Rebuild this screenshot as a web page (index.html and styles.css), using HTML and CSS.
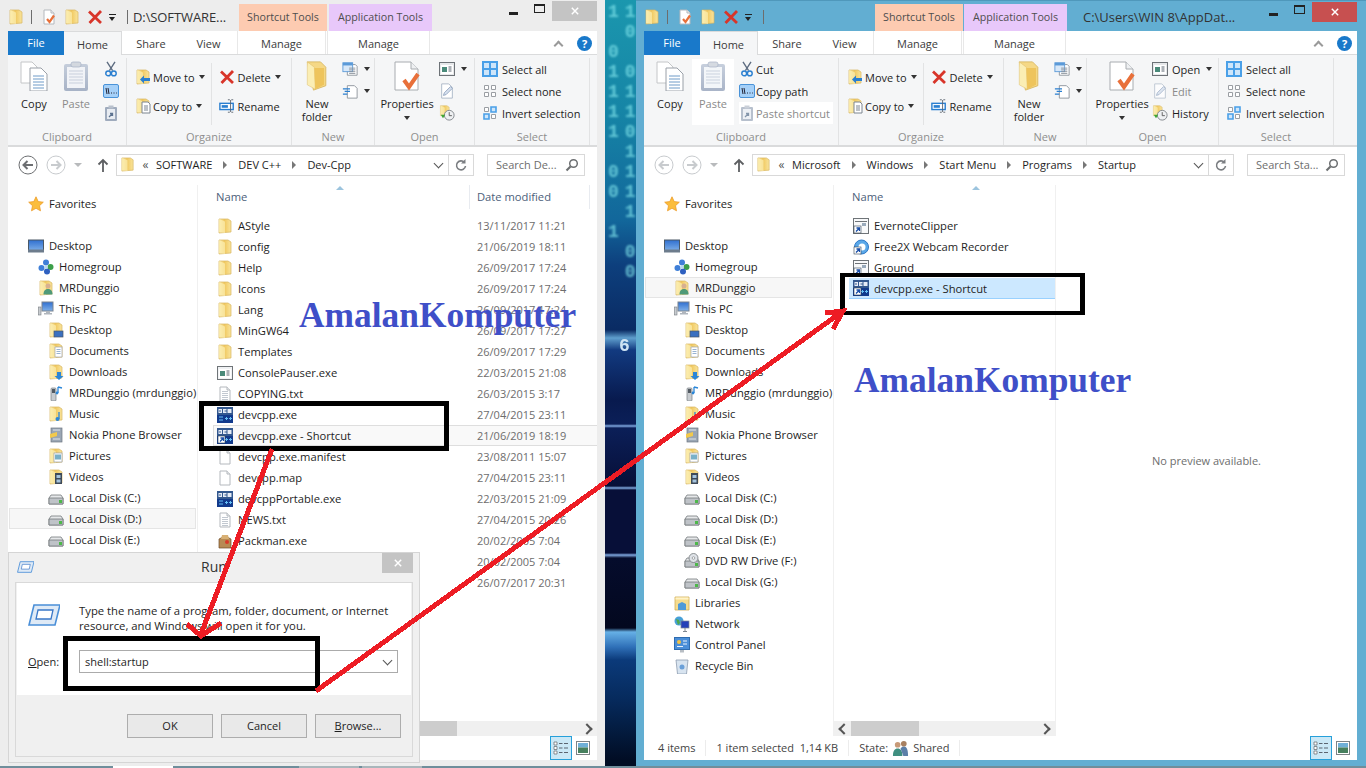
FILE: index.html
```html
<!DOCTYPE html>
<html lang="en">
<head>
  <meta charset="UTF-8">
  <title>Explorer</title>
  <link rel="stylesheet" href="styles.css">
</head>
<body>
  <svg class="defs" width="0" height="0">
    <defs>
      <linearGradient id="g-folder" x1="0" x2="1" y1="0" y2="0">
        <stop offset="0" stop-color="#fcf0b8"/><stop offset=".45" stop-color="#f0c860"/><stop offset=".6" stop-color="#f3d070"/><stop offset="1" stop-color="#f9e49c"/>
      </linearGradient>
      <linearGradient id="g-screen" x1="0" x2="0" y1="0" y2="1">
        <stop offset="0" stop-color="#2f6fd0"/><stop offset="1" stop-color="#7fb0e8"/>
      </linearGradient>
      <linearGradient id="g-clip" x1="0" x2="0" y1="0" y2="1">
        <stop offset="0" stop-color="#b5c0d2"/><stop offset="1" stop-color="#8d9cb6"/>
      </linearGradient>
      <symbol id="folder" viewBox="0 0 16 16">
        <path d="M2 1h9l3 2v11l-12 1z" fill="url(#g-folder)" stroke="#d8b660" stroke-width=".7"/>
        <path d="M2 1l6 2.5V15l-6-1z" fill="#fbecae" opacity=".75"/>
      </symbol>
      <symbol id="folder-tall" viewBox="0 0 26 34">
        <path d="M2 1h15l6 6v21l-14 5z" fill="#f5d886" stroke="#d8b660"/>
        <path d="M2 1l8 6 1 25-9-5z" fill="#fbeeb4" stroke="#e0c070" stroke-width=".6"/>
        <path d="M10 8h11v19l-10 5z" fill="#eec45c"/>
      </symbol>
      <symbol id="page" viewBox="0 0 16 16">
        <path d="M3 1h7l3 3v11H3z" fill="#fff" stroke="#b4b8bd"/>
        <path d="M10 1v3h3" fill="#eceef0" stroke="#b4b8bd"/>
      </symbol>
      <symbol id="txt" viewBox="0 0 16 16">
        <use href="#page"/>
        <path d="M5 5.500h6M5 7.500h6M5 9.500h6M5 11.500h6M5 13.500h6" stroke="#c2c8d0"/>
      </symbol>
      <symbol id="check" viewBox="0 0 16 16">
        <use href="#page"/>
        <path d="M6 10l2.500 3L13 6.500" fill="none" stroke="#e8703a" stroke-width="2.200"/>
      </symbol>
      <symbol id="cross" viewBox="0 0 16 16">
        <path d="M2 2.500L14 14M14 2L2.500 14" stroke="#d8352a" stroke-width="2.800"/>
      </symbol>
      <symbol id="copy" viewBox="0 0 28 30">
        <path d="M1 1h11l5 5v16H1z" fill="#fff" stroke="#c4c6c8"/>
        <path d="M10 7h11l6 6v17H10z" fill="#fff" stroke="#9aa0a8"/>
        <path d="M13 15h11M13 18h11M13 21h11M13 24h11M13 27h11" stroke="#6f9bc8"/>
      </symbol>
      <symbol id="paste" viewBox="0 0 26 30">
        <rect x="1" y="3" width="24" height="27" rx="2" fill="url(#g-clip)"/>
        <rect x="4" y="6" width="18" height="21" fill="#f0f3f8"/>
        <path d="M6 10h14M6 13h14M6 16h14M6 19h14M6 22h14" stroke="#b9c3d3"/>
        <rect x="8" y="1" width="10" height="5" rx="2" fill="#c8ced8" stroke="#8d9cb6" stroke-width=".7"/>
      </symbol>
      <symbol id="cut" viewBox="0 0 16 20">
        <path d="M3 1l7 11M13 1L6 12" stroke="#5d6c80" stroke-width="1.700"/>
        <circle cx="4.500" cy="15.500" r="3" fill="none" stroke="#2a7fd0" stroke-width="1.800"/>
        <circle cx="11.500" cy="15.500" r="3" fill="none" stroke="#2a7fd0" stroke-width="1.800"/>
      </symbol>
      <symbol id="copypath" viewBox="0 0 16 14">
        <rect x=".5" y=".5" width="15" height="13" rx="1.500" fill="#a5d0f8" stroke="#4a93d8"/>
        <path d="M3 4l1 6M5 4l1 6M8 9h1M10.500 9h1M13 9h.8" stroke="#223" stroke-width="1"/>
      </symbol>
      <symbol id="pasteshort" viewBox="0 0 14 16">
        <rect x="1" y="2" width="12" height="14" rx="1" fill="#9fabbd"/>
        <rect x="3" y="4" width="8" height="10" fill="#e8ecf2"/>
        <rect x="4.500" y="0.500" width="5" height="3" fill="#b8c0cc"/>
        <path d="M5 12l3-3M6 8.500h2.500V11" fill="none" stroke="#5d7390" stroke-width="1.300"/>
      </symbol>
      <symbol id="moveto" viewBox="0 0 16 16">
        <use href="#folder"/>
        <path d="M15 9H9V6.500L5 10.500l4 4V12h6z" fill="#2a7fd0"/>
      </symbol>
      <symbol id="copyto" viewBox="0 0 16 16">
        <use href="#folder"/>
        <path d="M7 4h6l2 2v9H7z" fill="#fff" stroke="#7d8590"/>
        <path d="M9 8h4M9 10h4M9 12h4" stroke="#7d8590"/>
      </symbol>
      <symbol id="rename" viewBox="0 0 18 16">
        <rect x="1" y="5" width="15" height="7" fill="#fff" stroke="#2a7fd0" stroke-width="1.600"/>
        <rect x="3" y="7" width="7" height="3" fill="#2a7fd0"/>
        <path d="M10 1h2l1 1 1-1h2M13 2v12M10 15h2l1-1 1 1h2" fill="none" stroke="#5b6470"/>
      </symbol>
      <symbol id="newitem" viewBox="0 0 18 16">
        <path d="M6 3h9l2 2v10H6z" fill="#fff" stroke="#8b9199"/>
        <rect x="1" y="1" width="11" height="10" fill="#d8e8f8" stroke="#5b9ad8"/>
        <rect x="1" y="1" width="11" height="3" fill="#5b9ad8"/>
        <path d="M8 7h7M8 9h7M8 11h7M8 13h7" stroke="#8b9199"/>
      </symbol>
      <symbol id="easy" viewBox="0 0 18 18">
        <path d="M6 3h8l3 3v11H6z" fill="#fff" stroke="#8b9199"/>
        <path d="M1 6.500h8M3 9.500h6M1 12.500h5" stroke="#2a7fd0" stroke-width="1.400"/>
      </symbol>
      <symbol id="props" viewBox="0 0 26 30">
        <path d="M1 1h16l7 7v21H1z" fill="#fff" stroke="#a8acb0"/>
        <path d="M17 1v7h7" fill="#eef0f2" stroke="#a8acb0"/>
        <path d="M10 19l5 7 9-13" fill="none" stroke="#e8703a" stroke-width="4"/>
      </symbol>
      <symbol id="openwin" viewBox="0 0 16 14">
        <rect x=".5" y=".5" width="15" height="13" fill="#e6e8ea" stroke="#6d7277"/>
        <rect x="2" y="3" width="12" height="9" fill="#fff"/>
        <rect x="3" y="5" width="5" height="5" fill="#4a8a7a"/>
        <path d="M9.500 5h3M9.500 7h3M9.500 9h3" stroke="#5b6470"/>
      </symbol>
      <symbol id="edit" viewBox="0 0 16 18">
        <path d="M2 1h8l4 4v12H2z" fill="#fff" stroke="#a8b4c6"/>
        <path d="M4 14l1-3 7-7 2 2-7 7z" fill="#d6e0ee" stroke="#8fa3bf"/>
      </symbol>
      <symbol id="history" viewBox="0 0 18 18">
        <use href="#folder" width="13" height="13"/>
        <circle cx="11.500" cy="11.500" r="5.500" fill="#eef0f2" stroke="#7b8186"/>
        <path d="M11.500 8v4h3" fill="none" stroke="#555"/>
        <path d="M2 11h5L4.500 15z" fill="#3fa535"/>
      </symbol>
      <symbol id="selall" viewBox="0 0 16 16">
        <rect width="16" height="16" fill="#4aa0e8"/>
        <path d="M2 2h5v5H2zM9 2h5v5H9zM2 9h5v5H2zM9 9h5v5H9z" fill="#cfe6fa"/>
      </symbol>
      <symbol id="selnone" viewBox="0 0 16 16">
        <path d="M2.500 2.500h4v4h-4zM9.500 2.500h4v4h-4zM2.500 9.500h4v4h-4zM9.500 9.500h4v4h-4z" fill="#fff" stroke="#9a9ea3"/>
      </symbol>
      <symbol id="invert" viewBox="0 0 16 16">
        <path d="M2.500 2.500h4v4h-4zM9.500 9.500h4v4h-4z" fill="#fff" stroke="#9a9ea3"/>
        <path d="M9 2h5v5H9zM2 9h5v5H2z" fill="#cfe6fa" stroke="#4aa0e8" stroke-width="1.600"/>
      </symbol>
      <symbol id="back" viewBox="0 0 20 20">
        <circle cx="10" cy="10" r="9" fill="#fff" stroke="currentColor"/>
        <path d="M15 10H6M9.500 6l-4 4 4 4" fill="none" stroke="currentColor" stroke-width="2"/>
      </symbol>
      <symbol id="fwd" viewBox="0 0 20 20">
        <circle cx="10" cy="10" r="9" fill="#fff" stroke="currentColor"/>
        <path d="M5 10h9M10.500 6l4 4-4 4" fill="none" stroke="currentColor" stroke-width="2"/>
      </symbol>
      <symbol id="up" viewBox="0 0 12 14">
        <path d="M6 14V2M1.500 6.500L6 2l4.500 4.500" fill="none" stroke="#5d5f62" stroke-width="1.800"/>
      </symbol>
      <symbol id="refresh" viewBox="0 0 12 14">
        <path d="M9.500 4.500A4.500 4.500 0 1 0 10.500 8" fill="none" stroke="#7b7e82" stroke-width="1.600"/>
        <path d="M10.500 1v4.500H6z" fill="#7b7e82"/>
      </symbol>
      <symbol id="search" viewBox="0 0 14 14">
        <circle cx="8.500" cy="5.500" r="3.800" fill="none" stroke="#6d7072" stroke-width="1.500"/>
        <path d="M5.500 8.500L1.500 12.500" stroke="#6d7072" stroke-width="2.200"/>
      </symbol>
      <symbol id="star" viewBox="0 0 16 16">
        <path d="M8 .8l2.200 4.800 5.100.6-3.800 3.500 1 5.100L8 12.300l-4.500 2.500 1-5.100L.7 6.200l5.100-.6z" fill="#fbbd3c" stroke="#ec9c2a" stroke-width=".8"/>
      </symbol>
      <symbol id="desktop" viewBox="0 0 16 13">
        <rect x=".5" y=".5" width="15" height="11" fill="url(#g-screen)" stroke="#4a5866"/>
        <rect y="10" width="16" height="3" fill="#6d7c8c"/>
      </symbol>
      <symbol id="home" viewBox="0 0 16 16">
        <circle cx="8" cy="3.500" r="3" fill="#3f7fd8"/>
        <circle cx="3.500" cy="9" r="3" fill="#3f7fd8"/>
        <circle cx="12.500" cy="8" r="3" fill="#3c9f4a"/>
        <circle cx="9" cy="12.500" r="3" fill="#2f60c0"/>
        <circle cx="8" cy="8" r="1.800" fill="#b8d8f0"/>
      </symbol>
      <symbol id="user" viewBox="0 0 16 16">
        <use href="#folder"/>
        <circle cx="10" cy="6" r="2.500" fill="#d8b090"/>
        <path d="M5.500 14.500c0-4 2-5.500 4.500-5.500s4.500 1.500 4.500 5.500z" fill="#4f9a78"/>
      </symbol>
      <symbol id="pc" viewBox="0 0 16 16">
        <rect x="4" y="1" width="11" height="9" fill="url(#g-screen)" stroke="#7b8490"/>
        <path d="M8 10h4v2H8zM6 12h8v1.500H6z" fill="#b0b6bd"/>
        <rect x="0.500" y="6" width="2.500" height="8" fill="#c8ccd0" stroke="#777c82" stroke-width=".6"/>
      </symbol>
      <symbol id="f-desktop" viewBox="0 0 16 16">
        <use href="#folder"/>
        <rect x="6" y="9" width="9" height="6" fill="#3a70c0" stroke="#4a5866" stroke-width=".7"/>
      </symbol>
      <symbol id="f-docs" viewBox="0 0 16 16">
        <use href="#folder"/>
        <rect x="7" y="4" width="7" height="10" fill="#fff" stroke="#a0a4a8" stroke-width=".7"/>
        <path d="M8.500 6.500h4M8.500 8.500h4M8.500 10.500h4" stroke="#7da0c8" stroke-width=".8"/>
      </symbol>
      <symbol id="f-down" viewBox="0 0 16 16">
        <use href="#folder"/>
        <path d="M9 8h4v4h2.500L11 16l-4.500-4H9z" fill="#2a86d8"/>
      </symbol>
      <symbol id="phone" viewBox="0 0 16 16">
        <rect x="3" y="3" width="5" height="13" rx="1" fill="#c8ccd0" stroke="#777c82" stroke-width=".7"/>
        <rect x="4" y="4" width="3" height="4" fill="#525a62"/>
        <path d="M10 2v6M10 2l4 1" fill="none" stroke="#2a86d8" stroke-width="1.300"/>
        <circle cx="9" cy="8" r="1.400" fill="#2a86d8"/>
      </symbol>
      <symbol id="f-music" viewBox="0 0 16 16">
        <use href="#folder"/>
        <path d="M11 6v7" stroke="#2a86d8" stroke-width="1.300"/>
        <circle cx="9.500" cy="13" r="2" fill="#2a86d8"/>
      </symbol>
      <symbol id="nokia" viewBox="0 0 16 16">
        <rect x="3" y="1" width="11" height="14" fill="#9aa6b4" stroke="#6d7680" stroke-width=".7"/>
        <path d="M2 7l7-2v4l-7 2z" fill="#f2c94c"/>
        <path d="M5 3h7M5 12h7" stroke="#dfe4ea"/>
      </symbol>
      <symbol id="f-pics" viewBox="0 0 16 16">
        <use href="#folder"/>
        <rect x="6" y="5" width="8" height="9" fill="#fff" stroke="#9aa0a6" stroke-width=".7"/>
        <rect x="7" y="6.500" width="6" height="5" fill="#79b0c8"/>
      </symbol>
      <symbol id="f-video" viewBox="0 0 16 16">
        <use href="#folder"/>
        <rect x="7" y="4" width="7" height="11" fill="#3e4a58"/>
        <rect x="8.500" y="6" width="4" height="3" fill="#a5c4de"/>
        <rect x="8.500" y="10.500" width="4" height="3" fill="#a5c4de"/>
      </symbol>
      <symbol id="disk" viewBox="0 0 16 16">
        <path d="M1 8l2-3h10l2 3v6H1z" fill="#e6e8ea" stroke="#74787c" stroke-width=".8"/>
        <path d="M1 8h14v6H1z" fill="#bfc3c8" stroke="#74787c" stroke-width=".8"/>
        <rect x="11" y="10" width="3" height="3" fill="#4db84a"/>
      </symbol>
      <symbol id="dvd" viewBox="0 0 16 16">
        <use href="#disk"/>
        <circle cx="9.500" cy="5" r="4.500" fill="#dfe3e8" stroke="#74787c" stroke-width=".8"/>
        <circle cx="9.500" cy="5" r="1.300" fill="#fff" stroke="#74787c" stroke-width=".6"/>
      </symbol>
      <symbol id="libs" viewBox="0 0 16 16">
        <path d="M1 2h14v13H1z" fill="#f6dc8e" stroke="#cfad58" stroke-width=".8"/>
        <rect x="1.500" y="2.500" width="13" height="2" fill="#fff3c8"/>
        <path d="M4 15V9l4-2 4 2v6z" fill="#4f9ad8"/>
      </symbol>
      <symbol id="net" viewBox="0 0 16 16">
        <circle cx="5" cy="5" r="4.500" fill="#47a0d8"/>
        <path d="M2 3l3 1 1 3-2 2z" fill="#4fa84a"/>
        <rect x="7" y="5" width="8" height="7" fill="#2540b8" stroke="#808890" stroke-width=".7"/>
        <path d="M11 12v3M9 15.500h4" stroke="#808890"/>
      </symbol>
      <symbol id="cpanel" viewBox="0 0 16 16">
        <rect x=".5" y=".5" width="15" height="12" fill="#4a8ed8" stroke="#2e6cb0"/>
        <circle cx="5" cy="5" r="2" fill="#f5c242"/>
        <path d="M9 4h4M9 7h4M3 9.500h6" stroke="#eaf3fb"/>
        <path d="M6 13h4v2.500H6z" fill="#b8bec4"/>
      </symbol>
      <symbol id="bin" viewBox="0 0 16 16">
        <path d="M2 2h12l-1.500 14h-9z" fill="#d8e4f0" stroke="#8d9cb0" stroke-width=".8"/>
        <circle cx="8" cy="9" r="2.500" fill="#6ba0d8"/>
      </symbol>
      <symbol id="shortcut" viewBox="0 0 16 16">
        <rect x=".5" y=".5" width="15" height="15" fill="#f8f9fa" stroke="#6f7478"/>
        <rect x="2" y="3" width="12" height="1" fill="#6f7478"/>
        <rect x="9" y="5" width="4" height="3" fill="#9ab"/>
        <rect x="1" y="8" width="7" height="7" fill="#fff" stroke="#345" stroke-width=".6"/>
        <path d="M3 13.500l3-3M3.500 10h3v3" fill="none" stroke="#1a4fa8" stroke-width="1.300"/>
      </symbol>
      <symbol id="free2x" viewBox="0 0 16 16">
        <circle cx="8.500" cy="8" r="7" fill="#5aa8e8" stroke="#2d78c8"/>
        <circle cx="9" cy="8" r="3.500" fill="#fff"/>
        <rect x="1" y="8" width="7" height="7" fill="#fff" stroke="#345" stroke-width=".6"/>
        <path d="M3 13.500l3-3M3.500 10h3v3" fill="none" stroke="#1a4fa8" stroke-width="1.300"/>
      </symbol>
      <symbol id="dev" viewBox="0 0 16 16">
        <rect width="16" height="16" fill="#123a8c"/>
        <rect width="16" height="8" fill="#33588f"/>
        <path d="M1.500 2h3.500v4H1.500zM6 2h3.500v4H6zM10.500 2h4v4h-4z" fill="#e6ecf6"/>
        <path d="M2 3.500h2v1H2zM7.500 3.500H10v1H7.500z" fill="#33588f"/>
        <path d="M2 10h4M2 13h4M8 11.500h3M9.500 10v3M12 11.500h3M13.500 10v3" stroke="#66c0f6"/>
      </symbol>
      <symbol id="devlink" viewBox="0 0 16 16">
        <use href="#dev"/>
        <rect x="1" y="8" width="7" height="7" fill="#fff" stroke="#345" stroke-width=".6"/>
        <path d="M3 13.500l3-3M3.500 10h3v3" fill="none" stroke="#1a4fa8" stroke-width="1.300"/>
      </symbol>
      <symbol id="exe" viewBox="0 0 16 16">
        <rect x=".5" y="1.500" width="15" height="13" fill="#f0f2f4" stroke="#6f7478"/>
        <rect x="2" y="4" width="12" height="9" fill="#fff"/>
        <rect x="3" y="6" width="5" height="5" fill="#4a8a7a"/>
        <path d="M9.500 6h3M9.500 8h3M9.500 10h3" stroke="#5b6470"/>
      </symbol>
      <symbol id="pack" viewBox="0 0 16 16">
        <path d="M2 6l6-3 6 3v9H2z" fill="#b78a54" stroke="#6d4c28" stroke-width=".7"/>
        <path d="M5 2h6l1 4H4z" fill="#d8b074"/>
        <circle cx="10" cy="9" r="2" fill="#d83a2a"/>
      </symbol>
      <symbol id="shared" viewBox="0 0 18 18">
        <circle cx="6" cy="5" r="3" fill="#c89a78"/>
        <circle cx="12.500" cy="4" r="3" fill="#a88060"/>
        <path d="M1 17c0-6 2-8 5-8s5 2 5 8z" fill="#3f8f80"/>
        <path d="M9 9c1-1 2-2 3.500-2 3 0 4.500 3 4.500 10h-5z" fill="#5c7fa8"/>
      </symbol>
      <symbol id="details" viewBox="0 0 16 14">
        <path d="M1 1h3v3H1zM1 5.500h3v3H1zM1 10h3v3H1z" fill="#fff" stroke="#6f7478" stroke-width=".8"/>
        <path d="M6 2.500h3.500M11 2.500h4M6 7h3.500M11 7h4M6 11.500h3.500M11 11.500h4" stroke="#5b6470"/>
      </symbol>
      <symbol id="thumb" viewBox="0 0 14 14">
        <rect x=".5" y=".5" width="13" height="13" fill="#fff" stroke="#7d8387"/>
        <rect x="2" y="2" width="10" height="4.500" fill="#6fb0d8"/>
        <rect x="2" y="6.500" width="10" height="5.500" fill="#47805e"/>
      </symbol>
      <symbol id="runapp" viewBox="0 0 32 22">
        <path d="M6 1h26l-5 20H1z" fill="#dfeaf6" stroke="#4a8fd8" stroke-width="1.600"/>
        <path d="M10 6h15l-2 9H8z" fill="#fff" stroke="#3a78c8" stroke-width="1.300"/>
      </symbol>
    </defs>
  </svg>

  <pre class="wall-digits">1 1
  0
0
1 0
1 1
1 1
1 0
  1
0 1
0 1
  1
1
  0
  0</pre>
  <div class="wall-six">6</div>

  <div class="taskstrip">
    <span class="task task-white"></span>
    <span class="task task-grey"></span>
    <span class="task task-grey"></span>
  </div>

  <!-- left window -->
  <section class="window window-left">
    <header class="titlebar">
      <svg class="ic"><use href="#folder"/></svg>
      <i class="qa-sep"></i>
      <svg class="ic"><use href="#check"/></svg>
      <svg class="ic"><use href="#folder"/></svg>
      <svg class="ic"><use href="#cross"/></svg>
      <i class="qa-drop"></i>
      <i class="qa-sep"></i>
      <span class="win-title left-title">D:\SOFTWARE...</span>
      <span class="tool-tab shortcut-tab">Shortcut Tools</span>
      <span class="tool-tab app-tab">Application Tools</span>
      <div class="win-btns">
        <i class="btn-min"></i>
        <i class="btn-max"></i>
        <span class="btn-close grey"><svg viewBox="0 0 10 10"><path d="M1 1l8 8M9 1L1 9"/></svg></span>
      </div>
    </header>
    <div class="pane">
      <nav class="tabs">
        <span class="tab tab-file">File</span>
        <span class="tab tab-home">Home</span>
        <span class="tab tab-share">Share</span>
        <span class="tab tab-view">View</span>
        <span class="tab tab-manage">Manage</span>
        <span class="tab tab-manage2">Manage</span>
        <span class="tab-collapse"></span>
        <span class="tab-help">?</span>
      </nav>
      <div class="ribbon">
        <div class="group g-clip-left">
          <div class="group-body">
            <div class="big big-copy"><svg class="ic-copy"><use href="#copy"/></svg><span>Copy</span></div>
            <div class="big big-paste off"><svg class="ic-copy"><use href="#paste"/></svg><span>Paste</span></div>
            <div class="small-col small-clip-left">
              <div class="small-row"><svg class="ic"><use href="#cut"/></svg></div>
              <div class="small-row"><svg class="ic"><use href="#copypath"/></svg></div>
              <div class="small-row"><svg class="ic"><use href="#pasteshort"/></svg></div>
            </div>
          </div>
          <div class="group-label">Clipboard</div>
        </div>
        <div class="group g-organize">
          <div class="group-body">
            <div class="org-col">
              <div class="small-row"><svg class="ic"><use href="#moveto"/></svg>Move to<i class="caret"></i></div>
              <div class="small-row"><svg class="ic"><use href="#copyto"/></svg>Copy to<i class="caret"></i></div>
            </div>
            <i class="org-sep"></i>
            <div class="org-col">
              <div class="small-row"><svg class="ic"><use href="#cross"/></svg>Delete<i class="caret"></i></div>
              <div class="small-row"><svg class="ic"><use href="#rename"/></svg>Rename</div>
            </div>
          </div>
          <div class="group-label">Organize</div>
        </div>
        <div class="group g-new">
          <div class="group-body">
            <div class="big big-new"><svg class="ic-folder"><use href="#folder-tall"/></svg><span>New<br>folder</span></div>
            <div class="small-col">
              <div class="small-row"><svg class="ic"><use href="#newitem"/></svg><i class="caret"></i></div>
              <div class="small-row"><svg class="ic"><use href="#easy"/></svg><i class="caret"></i></div>
            </div>
          </div>
          <div class="group-label">New</div>
        </div>
        <div class="group g-open-left">
          <div class="group-body">
            <div class="big big-props"><svg class="ic-copy"><use href="#props"/></svg><span>Properties<br><i class="caret"></i></span></div>
            <div class="small-col">
              <div class="small-row"><svg class="ic"><use href="#openwin"/></svg><i class="caret"></i></div>
              <div class="small-row"><svg class="ic"><use href="#edit"/></svg></div>
              <div class="small-row"><svg class="ic"><use href="#history"/></svg></div>
            </div>
          </div>
          <div class="group-label">Open</div>
        </div>
        <div class="group g-select">
          <div class="group-body">
            <div class="small-col">
              <div class="small-row"><svg class="ic"><use href="#selall"/></svg>Select all</div>
              <div class="small-row"><svg class="ic"><use href="#selnone"/></svg>Select none</div>
              <div class="small-row"><svg class="ic"><use href="#invert"/></svg>Invert selection</div>
            </div>
          </div>
          <div class="group-label">Select</div>
        </div>
      </div>
      <div class="addressrow">
        <svg class="nav-btn nav-back"><use href="#back"/></svg>
        <svg class="nav-btn nav-fwd off-btn"><use href="#fwd"/></svg>
        <i class="nav-caret"></i>
        <svg class="nav-up"><use href="#up"/></svg>
        <div class="addr">
          <svg class="ic addr-folder"><use href="#folder"/></svg>
          <span class="addr-more">«</span>
          <span class="crumb">SOFTWARE</span><i class="crumb-arrow"></i>
          <span class="crumb">DEV C++</span><i class="crumb-arrow"></i>
          <span class="crumb">Dev-Cpp</span>
          <i class="addr-chev"></i>
          <span class="addr-refresh"><svg><use href="#refresh"/></svg></span>
        </div>
        <div class="searchbox"><span>Search De...</span><svg><use href="#search"/></svg></div>
      </div>
      <div class="explorer">
        <div class="tree">
          <div class="tree-row lv0"><svg class="ic"><use href="#star"/></svg>Favorites</div>
          <div class="tree-gap"></div>
          <div class="tree-row lv0"><svg class="ic"><use href="#desktop"/></svg>Desktop</div>
          <div class="tree-row lv1"><svg class="ic"><use href="#home"/></svg>Homegroup</div>
          <div class="tree-row lv1"><svg class="ic"><use href="#user"/></svg>MRDunggio</div>
          <div class="tree-row lv1"><svg class="ic"><use href="#pc"/></svg>This PC</div>
          <div class="tree-row lv2"><svg class="ic"><use href="#f-desktop"/></svg>Desktop</div>
          <div class="tree-row lv2"><svg class="ic"><use href="#f-docs"/></svg>Documents</div>
          <div class="tree-row lv2"><svg class="ic"><use href="#f-down"/></svg>Downloads</div>
          <div class="tree-row lv2"><svg class="ic"><use href="#phone"/></svg>MRDunggio (mrdunggio)</div>
          <div class="tree-row lv2"><svg class="ic"><use href="#f-music"/></svg>Music</div>
          <div class="tree-row lv2"><svg class="ic"><use href="#nokia"/></svg>Nokia Phone Browser</div>
          <div class="tree-row lv2"><svg class="ic"><use href="#f-pics"/></svg>Pictures</div>
          <div class="tree-row lv2"><svg class="ic"><use href="#f-video"/></svg>Videos</div>
          <div class="tree-row lv2"><svg class="ic"><use href="#disk"/></svg>Local Disk (C:)</div>
          <div class="tree-row lv2 hot"><svg class="ic"><use href="#disk"/></svg>Local Disk (D:)</div>
          <div class="tree-row lv2"><svg class="ic"><use href="#disk"/></svg>Local Disk (E:)</div>
        </div>
        <div class="files files-left">
          <div class="col-head">
            <span class="col-name col-name-left">Name</span>
            <span class="col-date">Date modified</span>
            <i class="sort-caret sort-left"></i>
          </div>
          <div class="rows">
            <div class="row"><span class="name"><svg class="ic"><use href="#folder"/></svg>AStyle</span><span class="date">13/11/2017 11:21</span></div>
            <div class="row"><span class="name"><svg class="ic"><use href="#folder"/></svg>config</span><span class="date">21/06/2019 18:11</span></div>
            <div class="row"><span class="name"><svg class="ic"><use href="#folder"/></svg>Help</span><span class="date">26/09/2017 17:24</span></div>
            <div class="row"><span class="name"><svg class="ic"><use href="#folder"/></svg>Icons</span><span class="date">26/09/2017 17:24</span></div>
            <div class="row"><span class="name"><svg class="ic"><use href="#folder"/></svg>Lang</span><span class="date">26/09/2017 17:24</span></div>
            <div class="row"><span class="name"><svg class="ic"><use href="#folder"/></svg>MinGW64</span><span class="date">26/09/2017 17:27</span></div>
            <div class="row"><span class="name"><svg class="ic"><use href="#folder"/></svg>Templates</span><span class="date">26/09/2017 17:29</span></div>
            <div class="row"><span class="name"><svg class="ic"><use href="#exe"/></svg>ConsolePauser.exe</span><span class="date">22/03/2015 21:08</span></div>
            <div class="row"><span class="name"><svg class="ic"><use href="#txt"/></svg>COPYING.txt</span><span class="date">26/03/2015 3:17</span></div>
            <div class="row"><span class="name"><svg class="ic"><use href="#dev"/></svg>devcpp.exe</span><span class="date">27/04/2015 23:11</span></div>
            <div class="row row-hover"><span class="name"><svg class="ic"><use href="#devlink"/></svg>devcpp.exe - Shortcut</span><span class="date">21/06/2019 18:19</span></div>
            <div class="row"><span class="name"><svg class="ic"><use href="#page"/></svg>devcpp.exe.manifest</span><span class="date">23/08/2011 15:07</span></div>
            <div class="row"><span class="name"><svg class="ic"><use href="#page"/></svg>devcpp.map</span><span class="date">27/04/2015 23:11</span></div>
            <div class="row"><span class="name"><svg class="ic"><use href="#dev"/></svg>devcppPortable.exe</span><span class="date">22/03/2015 21:09</span></div>
            <div class="row"><span class="name"><svg class="ic"><use href="#txt"/></svg>NEWS.txt</span><span class="date">27/04/2015 20:26</span></div>
            <div class="row"><span class="name"><svg class="ic"><use href="#pack"/></svg>Packman.exe</span><span class="date">20/02/2005 7:04</span></div>
            <div class="row"><span class="name"></span><span class="date">20/02/2005 7:04</span></div>
            <div class="row"><span class="name"></span><span class="date">26/07/2017 20:31</span></div>
          </div>
          <div class="hscroll">
            <i class="sb-left"></i><i class="sb-thumb thumb-left"></i><i class="sb-right"></i>
          </div>
        </div>
      </div>
      <footer class="status">
        <div class="view-btns">
          <span class="view-on"><svg><use href="#details"/></svg></span>
          <svg class="view-off"><use href="#thumb"/></svg>
        </div>
      </footer>
    </div>
  </section>

  <!-- right window -->
  <section class="window window-right">
    <header class="titlebar">
      <svg class="ic"><use href="#folder"/></svg>
      <i class="qa-sep"></i>
      <svg class="ic"><use href="#check"/></svg>
      <svg class="ic"><use href="#folder"/></svg>
      <svg class="ic"><use href="#cross"/></svg>
      <i class="qa-drop"></i>
      <i class="qa-sep"></i>
      <span class="tool-tab shortcut-tab tab-push">Shortcut Tools</span>
      <span class="tool-tab app-tab">Application Tools</span>
      <span class="win-title right-title">C:\Users\WIN 8\AppDat...</span>
      <div class="win-btns">
        <i class="btn-min"></i>
        <i class="btn-max"></i>
        <span class="btn-close red"><svg viewBox="0 0 10 10"><path d="M1 1l8 8M9 1L1 9"/></svg></span>
      </div>
    </header>
    <div class="pane">
      <nav class="tabs">
        <span class="tab tab-file">File</span>
        <span class="tab tab-home">Home</span>
        <span class="tab tab-share">Share</span>
        <span class="tab tab-view">View</span>
        <span class="tab tab-manage">Manage</span>
        <span class="tab tab-manage2">Manage</span>
        <span class="tab-collapse"></span>
        <span class="tab-help">?</span>
      </nav>
      <div class="ribbon">
        <div class="group g-clip-right">
          <div class="group-body">
            <div class="big big-copy"><svg class="ic-copy"><use href="#copy"/></svg><span>Copy</span></div>
            <div class="big big-paste-right off lit"><svg class="ic-copy"><use href="#paste"/></svg><span>Paste</span></div>
            <div class="small-col small-clip-right">
              <div class="small-row"><svg class="ic"><use href="#cut"/></svg>Cut</div>
              <div class="small-row"><svg class="ic"><use href="#copypath"/></svg>Copy path</div>
              <div class="small-row off lit"><svg class="ic"><use href="#pasteshort"/></svg>Paste shortcut</div>
            </div>
          </div>
          <div class="group-label">Clipboard</div>
        </div>
        <div class="group g-organize">
          <div class="group-body">
            <div class="org-col">
              <div class="small-row"><svg class="ic"><use href="#moveto"/></svg>Move to<i class="caret"></i></div>
              <div class="small-row"><svg class="ic"><use href="#copyto"/></svg>Copy to<i class="caret"></i></div>
            </div>
            <i class="org-sep"></i>
            <div class="org-col">
              <div class="small-row"><svg class="ic"><use href="#cross"/></svg>Delete<i class="caret"></i></div>
              <div class="small-row"><svg class="ic"><use href="#rename"/></svg>Rename</div>
            </div>
          </div>
          <div class="group-label">Organize</div>
        </div>
        <div class="group g-new">
          <div class="group-body">
            <div class="big big-new"><svg class="ic-folder"><use href="#folder-tall"/></svg><span>New<br>folder</span></div>
            <div class="small-col">
              <div class="small-row"><svg class="ic"><use href="#newitem"/></svg><i class="caret"></i></div>
              <div class="small-row"><svg class="ic"><use href="#easy"/></svg><i class="caret"></i></div>
            </div>
          </div>
          <div class="group-label">New</div>
        </div>
        <div class="group g-open-right">
          <div class="group-body">
            <div class="big big-props"><svg class="ic-copy"><use href="#props"/></svg><span>Properties<br><i class="caret"></i></span></div>
            <div class="small-col">
              <div class="small-row"><svg class="ic"><use href="#openwin"/></svg>Open<i class="caret"></i></div>
              <div class="small-row off"><svg class="ic"><use href="#edit"/></svg>Edit</div>
              <div class="small-row"><svg class="ic"><use href="#history"/></svg>History</div>
            </div>
          </div>
          <div class="group-label">Open</div>
        </div>
        <div class="group g-select">
          <div class="group-body">
            <div class="small-col">
              <div class="small-row"><svg class="ic"><use href="#selall"/></svg>Select all</div>
              <div class="small-row"><svg class="ic"><use href="#selnone"/></svg>Select none</div>
              <div class="small-row"><svg class="ic"><use href="#invert"/></svg>Invert selection</div>
            </div>
          </div>
          <div class="group-label">Select</div>
        </div>
      </div>
      <div class="addressrow">
        <svg class="nav-btn nav-back off-btn"><use href="#back"/></svg>
        <svg class="nav-btn nav-fwd off-btn"><use href="#fwd"/></svg>
        <i class="nav-caret"></i>
        <svg class="nav-up"><use href="#up"/></svg>
        <div class="addr">
          <svg class="ic addr-folder"><use href="#folder"/></svg>
          <span class="addr-more">«</span>
          <span class="crumb">Microsoft</span><i class="crumb-arrow"></i>
          <span class="crumb">Windows</span><i class="crumb-arrow"></i>
          <span class="crumb">Start Menu</span><i class="crumb-arrow"></i>
          <span class="crumb">Programs</span><i class="crumb-arrow"></i>
          <span class="crumb">Startup</span>
          <i class="addr-chev"></i>
          <span class="addr-refresh"><svg><use href="#refresh"/></svg></span>
        </div>
        <div class="searchbox"><span>Search Sta...</span><svg><use href="#search"/></svg></div>
      </div>
      <div class="explorer">
        <div class="tree">
          <div class="tree-row lv0"><svg class="ic"><use href="#star"/></svg>Favorites</div>
          <div class="tree-gap"></div>
          <div class="tree-row lv0"><svg class="ic"><use href="#desktop"/></svg>Desktop</div>
          <div class="tree-row lv1"><svg class="ic"><use href="#home"/></svg>Homegroup</div>
          <div class="tree-row lv1 hot"><svg class="ic"><use href="#user"/></svg>MRDunggio</div>
          <div class="tree-row lv1"><svg class="ic"><use href="#pc"/></svg>This PC</div>
          <div class="tree-row lv2"><svg class="ic"><use href="#f-desktop"/></svg>Desktop</div>
          <div class="tree-row lv2"><svg class="ic"><use href="#f-docs"/></svg>Documents</div>
          <div class="tree-row lv2"><svg class="ic"><use href="#f-down"/></svg>Downloads</div>
          <div class="tree-row lv2"><svg class="ic"><use href="#phone"/></svg>MRDunggio (mrdunggio)</div>
          <div class="tree-row lv2"><svg class="ic"><use href="#f-music"/></svg>Music</div>
          <div class="tree-row lv2"><svg class="ic"><use href="#nokia"/></svg>Nokia Phone Browser</div>
          <div class="tree-row lv2"><svg class="ic"><use href="#f-pics"/></svg>Pictures</div>
          <div class="tree-row lv2"><svg class="ic"><use href="#f-video"/></svg>Videos</div>
          <div class="tree-row lv2"><svg class="ic"><use href="#disk"/></svg>Local Disk (C:)</div>
          <div class="tree-row lv2"><svg class="ic"><use href="#disk"/></svg>Local Disk (D:)</div>
          <div class="tree-row lv2"><svg class="ic"><use href="#disk"/></svg>Local Disk (E:)</div>
          <div class="tree-row lv2"><svg class="ic"><use href="#dvd"/></svg>DVD RW Drive (F:)</div>
          <div class="tree-row lv2"><svg class="ic"><use href="#disk"/></svg>Local Disk (G:)</div>
          <div class="tree-row lv1"><svg class="ic"><use href="#libs"/></svg>Libraries</div>
          <div class="tree-row lv1"><svg class="ic"><use href="#net"/></svg>Network</div>
          <div class="tree-row lv1"><svg class="ic"><use href="#cpanel"/></svg>Control Panel</div>
          <div class="tree-row lv1"><svg class="ic"><use href="#bin"/></svg>Recycle Bin</div>
        </div>
        <div class="files files-right">
          <div class="col-head">
            <span class="col-name col-name-right">Name</span>
            <i class="sort-caret sort-right"></i>
          </div>
          <div class="rows">
            <div class="row"><span class="name"><svg class="ic"><use href="#shortcut"/></svg>EvernoteClipper</span></div>
            <div class="row"><span class="name"><svg class="ic"><use href="#free2x"/></svg>Free2X Webcam Recorder</span></div>
            <div class="row"><span class="name"><svg class="ic"><use href="#shortcut"/></svg>Ground</span></div>
            <div class="row row-sel"><span class="name"><svg class="ic"><use href="#devlink"/></svg>devcpp.exe - Shortcut</span></div>
          </div>
          <div class="hscroll">
            <i class="sb-left"></i><i class="sb-thumb thumb-right"></i><i class="sb-right"></i>
          </div>
        </div>
        <div class="preview">No preview available.</div>
      </div>
      <footer class="status">
        <span class="st-item">4 items</span>
        <span class="st-item">1 item selected&nbsp; 1,14 KB</span>
        <span class="st-item st-shared">State: <svg class="ic"><use href="#shared"/></svg> Shared</span>
        <div class="view-btns">
          <span class="view-on"><svg><use href="#details"/></svg></span>
          <svg class="view-off"><use href="#thumb"/></svg>
        </div>
      </footer>
    </div>
  </section>

  <!-- run dialog sits over the left window -->
  <section class="run">
    <header class="run-title">
      <svg class="run-mini"><use href="#runapp"/></svg>
      <span class="run-name">Run</span>
      <span class="btn-close grey run-close"><svg viewBox="0 0 10 10"><path d="M1 1l8 8M9 1L1 9"/></svg></span>
    </header>
    <div class="run-panel">
      <div class="run-white">
        <div class="run-msg">
          <svg class="run-icon"><use href="#runapp"/></svg>
          <p>Type the name of a program, folder, document, or Internet<br>resource, and Windows will open it for you.</p>
        </div>
        <div class="run-open">
          <label><u>O</u>pen:</label>
          <div class="run-input">shell:startup<i class="addr-chev"></i></div>
        </div>
      </div>
      <div class="run-buttons">
        <span class="run-btn">OK</span>
        <span class="run-btn">Cancel</span>
        <span class="run-btn"><u>B</u>rowse...</span>
      </div>
    </div>
  </section>

  <!-- annotations -->
  <div class="mark mark-files"></div>
  <div class="mark mark-run"></div>
  <div class="mark mark-dest"></div>
  <div class="wm wm-left">AmalanKomputer</div>
  <div class="wm wm-right">AmalanKomputer</div>
  <svg class="arrows" width="1366" height="768">
    <path d="M272 449L201 634M187 624L201 636L221 623"/>
    <path d="M316 691L843 311M825 313L843 311L833 329"/>
  </svg>
</body>
</html>
```

FILE: styles.css
```css
* { box-sizing: border-box; }
html, body { margin: 0; height: 100%; overflow: hidden; }
body {
  position: relative;
  width: 1366px;
  height: 768px;
  background: linear-gradient(#1b97ae 0, #1685a6 110px, #12679b 220px, #0d3f7d 265px, #0a2b63 330px, #5f9fce 338px, #123a80 350px, #081a4e 400px, #0b1f58 424px, #7fa8e0 426px, #0b1f58 428px, #070f38 486px, #7fa8e0 488px, #070f38 490px, #070f38 553px, #7fa8e0 555px, #050c2c 558px, #03081f 628px, #66b0e6 632px, #2f70b8 647px, #0b3a7a 660px, #062a5c 700px, #010d24 760px);
  font-family: "Open Sans", "Noto Sans", sans-serif;
  font-size: 11px;
  color: #1e1e1e;
}
.defs { position: absolute; }
svg { display: block; flex: none; }
i { display: block; flex: none; }

/* wallpaper */
.wall-digits {
  position: absolute;
  left: 608px;
  top: 2px;
  margin: 0;
  font-family: "Liberation Mono", monospace;
  font-size: 18px;
  font-weight: bold;
  line-height: 20px;
  letter-spacing: -2.400px;
  color: #7fe3ea;
  opacity: .72;
  filter: blur(.8px);
}
.wall-six {
  position: absolute;
  left: 619px;
  top: 336px;
  font: bold 18px "Liberation Mono", monospace;
  color: #cfe4f4;
  filter: blur(.6px);
}
.taskstrip {
  position: absolute;
  left: 0;
  top: 766px;
  width: 1366px;
  height: 2px;
  background: #6f8e9b;
  display: flex;
  padding-left: 113px;
}
.task { height: 2px; width: 60px; margin-right: 126px; }
.task-white { background: #fff; }
.task-grey { background: #a9b6bb; margin-right: 3px; }

/* windows */
.window {
  position: absolute;
  top: 0;
  height: 766px;
  padding: 0 8px 6px;
  display: flex;
  flex-direction: column;
}
.window-left { left: 0; width: 605px; background: #ededed; }
.window-right { left: 636px; width: 730px; padding-right: 9px; background: #62aed2; border-top: 1px solid #4f98bb; }

.titlebar { height: 31px; display: flex; align-items: center; position: relative; flex: none; }
.window-right .titlebar { height: 30px; }
.titlebar .ic { margin-right: 7px; margin-top: 2px; }
.titlebar .ic:first-child { margin-right: 0; }
.qa-sep { width: 1px; height: 14px; background: #6d6d6d; margin: 2px 9px 0 7px; }
.qa-drop { width: 7px; height: 7px; margin: 3px 4px 0 -1px; border-top: 1px solid #222; position: relative; }
.qa-drop::after {
  content: "";
  position: absolute;
  left: 0;
  top: 2px;
  border: 3.500px solid transparent;
  border-top: 4px solid #222;
  border-bottom: 0;
}
.win-title { font-size: 13px; color: #333; white-space: nowrap; margin-top: 2px; }
.left-title { width: 106px; margin-left: -4px; letter-spacing: -.1px; }
.right-title { margin-left: 16px; font-size: 13px; }
.tool-tab {
  align-self: flex-end;
  height: 27px;
  line-height: 27px;
  text-align: center;
  font-size: 10.700px;
  color: #4e4e4e;
}
.shortcut-tab { width: 88px; background: #fdcbb1; margin-right: 2px; }
.app-tab { width: 103px; background: #e8c8fa; }
.window-right .shortcut-tab { margin-right: 1px; }
.tab-push { margin-left: 102px; }
.win-btns { margin-left: auto; display: flex; align-items: center; align-self: flex-start; height: 21px; }
.btn-min { width: 9px; height: 3px; background: #222; margin: 5px 16px 0 0; }
.btn-max { width: 11px; height: 9px; border: 1px solid #222; border-top-width: 2px; margin: -4px 7px 0 0; }
.btn-close { width: 45px; height: 20px; display: flex; align-items: center; justify-content: center; margin-top: 1px; }
.btn-close svg { width: 8px; height: 8px; fill: none; stroke: #fff; stroke-width: 1.800; }
.btn-close.grey { background: #c4c4c4; }
.btn-close.red { background: #c75050; }

.pane { flex: 1; background: #fff; display: flex; flex-direction: column; min-height: 0; }

/* ribbon tabs */
.tabs { height: 24px; display: flex; border-bottom: 1px solid #dadbdc; position: relative; flex: none; }
.tab { text-align: center; line-height: 25px; color: #3b3b3b; font-size: 11px; }
.tab-file { width: 56px; background: #1979ca; color: #fff; height: 24px; line-height: 23px; }
.tab-home { width: 58px; height: 24px; border: 1px solid #dadbdc; border-bottom: 0; border-left: 0; background: #f5f6f7; position: relative; z-index: 1; line-height: 25px; }
.tab-share { width: 58px; }
.tab-view { width: 57px; }
.tab-manage { width: 89px; border-left: 1px solid #e8e8e8; border-right: 1px solid #e8e8e8; }
.tab-manage2 { width: 103px; margin-left: 1px; border-left: 1px solid #e8e8e8; border-right: 1px solid #e8e8e8; }
.tab-collapse {
  width: 7px; height: 7px;
  border-left: 2px solid #9a9a9a;
  border-top: 2px solid #9a9a9a;
  transform: rotate(45deg);
  margin: 11px 0 0 auto;
}
.tab-help {
  width: 15px; height: 15px;
  border-radius: 50%;
  background: #1979ca;
  color: #fff;
  font-weight: bold;
  font-size: 11px;
  line-height: 15px;
  text-align: center;
  margin: 5px 5px 0 15px;
}

/* ribbon */
.ribbon { height: 92px; background: #f5f6f7; border-bottom: 2px solid #dadbdc; display: flex; flex: none; }
.group { height: 87px; margin-top: 3px; border-right: 1px solid #e2e3e4; display: flex; flex-direction: column; flex: none; }
.g-clip-left { width: 119px; }
.g-clip-right { width: 195px; }
.g-organize { width: 165px; }
.g-new { width: 83px; }
.g-open-left { width: 100px; }
.g-open-right { width: 132px; }
.g-select { width: 115px; }
.group-body { height: 71px; display: flex; }
.group-label { line-height: 16px; height: 16px; text-align: center; color: #8e8e8e; font-size: 11px; }
.big { display: flex; flex-direction: column; align-items: center; padding-top: 3px; text-align: center; line-height: 13px; }
.big span { margin-top: 6px; }
.ic { width: 16px; height: 16px; }
.ic-copy { width: 28px; height: 30px; }
.ic-folder { width: 26px; height: 30px; }
.off { color: #8a8a8a; }
.off svg { opacity: .75; }
.lit { background: #fff; }
.big-copy { width: 44px; margin-left: 4px; }
.big-paste { width: 40px; }
.big-paste-right { width: 42px; margin: 1px 0 4px; padding-top: 2px; }
.small-clip-left { margin-left: 7px; }
.small-clip-right { margin-left: 5px; }
.small-clip-right .small-row { gap: 1px; }
.small-col { display: flex; flex-direction: column; }
.small-row { height: 22px; display: flex; align-items: center; gap: 4px; white-space: nowrap; padding-right: 3px; }
.caret {
  width: 0; height: 0;
  border: 3px solid transparent;
  border-top: 4px solid #333;
  border-bottom: 0;
  margin-left: 2px;
}
.big .caret { display: inline-block; margin: 0; vertical-align: middle; }
.org-col { display: flex; flex-direction: column; gap: 7px; padding: 8px 0 0 8px; width: 85px; }
.org-col .small-row { gap: 2px; }
.org-sep + .org-col { width: 79px; padding-left: 7px; }
.org-sep { width: 1px; height: 62px; margin-top: 5px; background: #e2e3e4; }
.big-new { width: 50px; }
.big-props { width: 58px; margin-left: 3px; }
.g-open-left .small-col { margin-left: 3px; }
.g-open-right .big-props { margin-left: 6px; }
.g-open-right .small-col { margin-left: 1px; }
.g-select .small-col { margin-left: 7px; }

/* address row */
.addressrow { height: 38px; display: flex; align-items: center; padding-bottom: 3px; flex: none; }
.nav-btn { width: 20px; height: 20px; color: #6d6f72; }
.off-btn { color: #c8cbce; }
.nav-back { margin-left: 10px; }
.nav-fwd { margin-left: 8px; }
.nav-caret {
  width: 0; height: 0;
  border: 4px solid transparent;
  border-top: 4px solid #b8babc;
  border-bottom: 0;
  margin-left: 8px;
}
.nav-up { width: 12px; height: 14px; margin-left: 15px; margin-right: 7px; }
.addr {
  flex: 1;
  height: 22px;
  border: 1px solid #d9d9d9;
  display: flex;
  align-items: center;
  font-size: 11px;
}
.addr-folder { margin-left: 3px; width: 15px; height: 15px; }
.addr-more { width: 21px; text-align: center; color: #555; font-size: 12px; }
.crumb { color: #1e1e1e; }
.crumb-arrow {
  width: 0; height: 0;
  margin: 0 11px;
  border: 4px solid transparent;
  border-left: 4px solid #777;
  border-right: 0;
}
.addr-chev {
  width: 7px; height: 7px;
  border-right: 1.500px solid #555;
  border-bottom: 1.500px solid #555;
  transform: rotate(45deg);
  margin: -3px 6px 0 auto;
  flex: none;
}
.addr-refresh { width: 25px; height: 20px; border-left: 1px solid #d9d9d9; display: flex; align-items: center; justify-content: center; flex: none; }
.addr-refresh svg { width: 12px; height: 14px; }
.searchbox {
  width: 98px;
  height: 22px;
  margin: 0 12px 0 13px;
  border: 1px solid #d9d9d9;
  display: flex;
  align-items: center;
  justify-content: space-between;
  padding: 0 5px 0 8px;
  color: #6d6d6d;
  font-size: 11px;
}
.searchbox svg { width: 14px; height: 14px; }

/* tree + file list */
.explorer { height: 551px; display: flex; flex: none; }
.tree { width: 190px; padding-top: 8px; border-right: 1px solid #f0f0f0; flex: none; overflow: hidden; font-size: 11.200px; }
.tree-row { height: 21px; display: flex; align-items: center; white-space: nowrap; overflow: hidden; }
.tree-row .ic { margin-right: 5px; }
.tree-gap { height: 21px; }
.lv0 { padding-left: 20px; }
.lv1 { padding-left: 30px; }
.lv2 { padding-left: 40px; }
.hot { background: #f7f7f7; border: 1px solid #e5e5e5; margin: 0 1px; }
.lv2.hot { padding-left: 38px; }
.lv1.hot { padding-left: 28px; }

.files { display: flex; flex-direction: column; position: relative; min-width: 0; font-size: 11.200px; }
.files-left { flex: 1; }
.files-right { width: 222px; flex: none; border-right: 1px solid #f0f0f0; }
.col-head { height: 30px; display: flex; flex: none; position: relative; }
.col-name { color: #4c607a; line-height: 24px; padding-left: 18px; }
.col-name-left { width: 272px; border-right: 1px solid #e8ebf0; height: 24px; }
.col-name-right { width: 222px; }
.col-date { color: #4c607a; line-height: 24px; padding-left: 7px; width: 120px; border-right: 1px solid #e8ebf0; height: 24px; }
.sort-caret {
  position: absolute;
  top: 1px;
  border: 4px solid transparent;
  border-bottom: 4px solid #9cc4de;
  border-top: 0;
}
.sort-left { left: 138px; }
.sort-right { left: 138px; }
.rows { flex: 1; min-height: 0; overflow: hidden; }
.row { height: 21px; display: flex; align-items: center; margin-left: 15px; padding-left: 4px; }
.name { width: 260px; display: flex; align-items: center; gap: 5px; white-space: nowrap; flex: none; }
.date { color: #6d6d6d; font-size: 11px; }
.row-hover { background: #f9f9f9; box-shadow: inset 0 1px #dedede, inset 0 -1px #dedede, inset 1px 0 #dedede; }
.row-sel { background: #cce8ff; border-bottom: 1px solid #99d1ff; width: 206px; }
.files-right .name { width: 200px; }
.hscroll { height: 15px; background: #f0f0f0; display: flex; align-items: center; flex: none; position: relative; }
.sb-left { width: 8px; height: 8px; margin-left: 6px; border-left: 2px solid #555; border-bottom: 2px solid #555; transform: rotate(45deg); }
.sb-thumb { height: 15px; background: #cdcdcd; margin-left: 3px; }
.thumb-left { width: 242px; }
.thumb-right { width: 68px; }
.sb-right { width: 8px; height: 8px; margin: 0 6px 0 auto; border-right: 2px solid #555; border-top: 2px solid #555; transform: rotate(45deg); }
.preview { flex: 1; display: flex; align-items: center; justify-content: center; color: #6d6d6d; }

/* status */
.status { height: 24px; display: flex; align-items: center; flex: none; color: #444; padding-left: 4px; }
.st-item { padding: 0 10px; border-right: 1px solid #ececec; height: 16px; line-height: 16px; display: flex; align-items: center; white-space: nowrap; }
.st-shared .ic { margin: 0 4px; width: 17px; height: 17px; }
.view-btns { margin-left: auto; margin-right: 7px; display: flex; align-items: center; gap: 4px; }
.view-on { width: 22px; height: 24px; border: 1px solid #26a0da; background: #cbe8f6; display: flex; align-items: center; justify-content: center; }
.view-on svg { width: 16px; height: 14px; }
.view-off { width: 14px; height: 14px; }

/* run dialog */
.run {
  position: absolute;
  left: 8px;
  top: 552px;
  width: 412px;
  height: 211px;
  background: #f0f0f0;
  border: 1px solid #d5d5d5;
  padding: 0 6px 5px;
  display: flex;
  flex-direction: column;
}
.run-title { height: 29px; display: flex; align-items: flex-start; position: relative; flex: none; }
.run-mini { width: 17px; height: 12px; margin: 8px 0 0 2px; }
.run-name { position: absolute; left: 0; right: 0; top: 4px; text-align: center; font-size: 14px; color: #333; }
.run-close { position: absolute; right: 0; top: 0; width: 31px; height: 20px; margin-top: 0; }
.run-panel { flex: 1; border: 1px solid #d9d9d9; padding: 0 1px; display: flex; flex-direction: column; }
.run-white { height: 112px; background: #fff; padding: 20px 13px 0 11px; flex: none; }
.run-msg { display: flex; }
.run-icon { width: 32px; height: 22px; margin-top: 1px; }
.run-msg p { margin: 0 0 0 19px; font-size: 11.300px; line-height: 15px; color: #1e1e1e; white-space: nowrap; }
.run-open { display: flex; align-items: center; margin-top: 17px; }
.run-open label { width: 51px; }
.run-input {
  flex: 1;
  height: 23px;
  border: 1px solid #ababab;
  display: flex;
  align-items: center;
  padding-left: 5px;
}
.run-buttons { display: flex; justify-content: flex-end; gap: 8px; padding: 19px 10px 0 0; }
.run-btn {
  width: 86px;
  height: 24px;
  border: 1px solid #adadad;
  background: #e9e9e9;
  text-align: center;
  line-height: 22px;
}

/* annotations */
.mark { position: absolute; border: 5px solid #000; }
.mark-files { left: 199px; top: 401px; width: 250px; height: 50px; }
.mark-run { left: 63px; top: 636px; width: 257px; height: 55px; }
.mark-dest { left: 840px; top: 273px; width: 245px; height: 42px; border-width: 4px 5px; }
.wm {
  position: absolute;
  font-family: "Liberation Serif", serif;
  font-weight: bold;
  font-size: 35.400px;
  line-height: 40px;
  color: #3f4fc8;
  white-space: nowrap;
}
.wm-left { left: 299px; top: 295px; }
.wm-right { left: 854px; top: 360px; }
.arrows { position: absolute; left: 0; top: 0; }
.arrows path { fill: none; stroke: #ed1c24; stroke-width: 5; shape-rendering: crispEdges; }
```
